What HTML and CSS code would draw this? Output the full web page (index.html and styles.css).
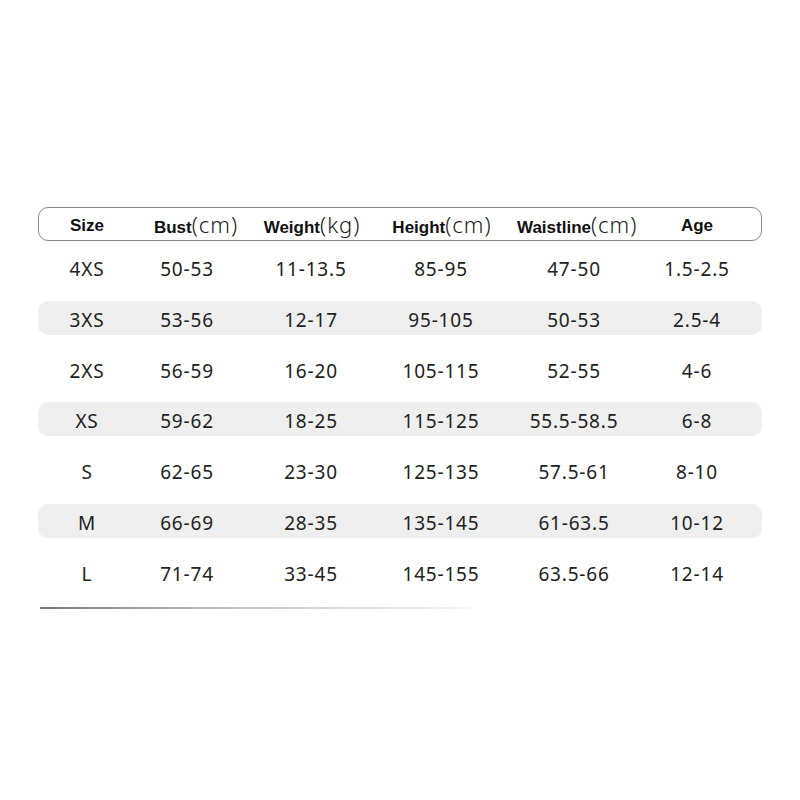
FILE: index.html
```html
<!DOCTYPE html>
<html>
<head>
<meta charset="utf-8">
<link rel="stylesheet" href="styles.css">
</head>
<body>
<div class="chart">
  <div class="head">
    <div class="h">Size</div>
    <div class="h">Bust<span class="u">(cm)</span></div>
    <div class="h">Weight<span class="u">(kg)</span></div>
    <div class="h">Height<span class="u">(cm)</span></div>
    <div class="h">Waistline<span class="u">(cm)</span></div>
    <div class="h age">Age</div>
  </div>
  <div class="rows">
    <div class="row"><span>4XS</span><span>50-53</span><span>11-13.5</span><span>85-95</span><span>47-50</span><span>1.5-2.5</span></div>
    <div class="row shade"><span>3XS</span><span>53-56</span><span>12-17</span><span>95-105</span><span>50-53</span><span>2.5-4</span></div>
    <div class="row"><span>2XS</span><span>56-59</span><span>16-20</span><span>105-115</span><span>52-55</span><span>4-6</span></div>
    <div class="row shade"><span>XS</span><span>59-62</span><span>18-25</span><span>115-125</span><span>55.5-58.5</span><span>6-8</span></div>
    <div class="row"><span>S</span><span>62-65</span><span>23-30</span><span>125-135</span><span>57.5-61</span><span>8-10</span></div>
    <div class="row shade"><span>M</span><span>66-69</span><span>28-35</span><span>135-145</span><span>61-63.5</span><span>10-12</span></div>
    <div class="row"><span>L</span><span>71-74</span><span>33-45</span><span>145-155</span><span>63.5-66</span><span>12-14</span></div>
  </div>
  <div class="rule"></div>
</div>
</body>
</html>
```

FILE: styles.css
```css
html, body {
  margin: 0;
  padding: 0;
  background: #ffffff;
}
.chart {
  width: 724px;
  margin: 0;
  padding: 207px 0 0 38px;
}
.head {
  box-sizing: border-box;
  height: 34px;
  border: 1px solid #8a8a8a;
  border-radius: 10px;
  display: grid;
  grid-template-columns: 96px 122px 110px 150px 84px 1fr;
  align-items: center;
}
.h {
  font-family: "Liberation Sans", Arial, sans-serif;
  font-weight: bold;
  font-size: 17px;
  color: #111;
  text-align: center;
  white-space: nowrap;
  line-height: 32px;
}
.h.age {
  padding-left: 32px;
}
.u {
  font-family: "Noto Sans", sans-serif;
  font-weight: 300;
  font-size: 22px;
  color: #222;
  letter-spacing: 1px;
}
.rows {
  display: flex;
  flex-direction: column;
  gap: 16.8px;
  margin-top: 9px;
}
.row {
  box-sizing: border-box;
  height: 34px;
  padding-top: 4px;
  border-radius: 10px;
  display: grid;
  grid-template-columns: 98px 102px 146px 114px 152px 1fr;
  align-items: center;
  font-family: "Noto Sans", sans-serif;
  font-size: 19px;
  letter-spacing: 0.8px;
  color: #222;
}
.row span {
  text-align: center;
  white-space: nowrap;
}
.row span:last-child {
  padding-right: 18px;
}
.row.shade {
  background: #efefef;
}
.rule {
  margin-top: 18px;
  margin-left: 2px;
  height: 2px;
  width: 430px;
  background: linear-gradient(to right, #7a7a7a 0%, #c4c4c4 45%, #f6f6f6 100%);
}
```
